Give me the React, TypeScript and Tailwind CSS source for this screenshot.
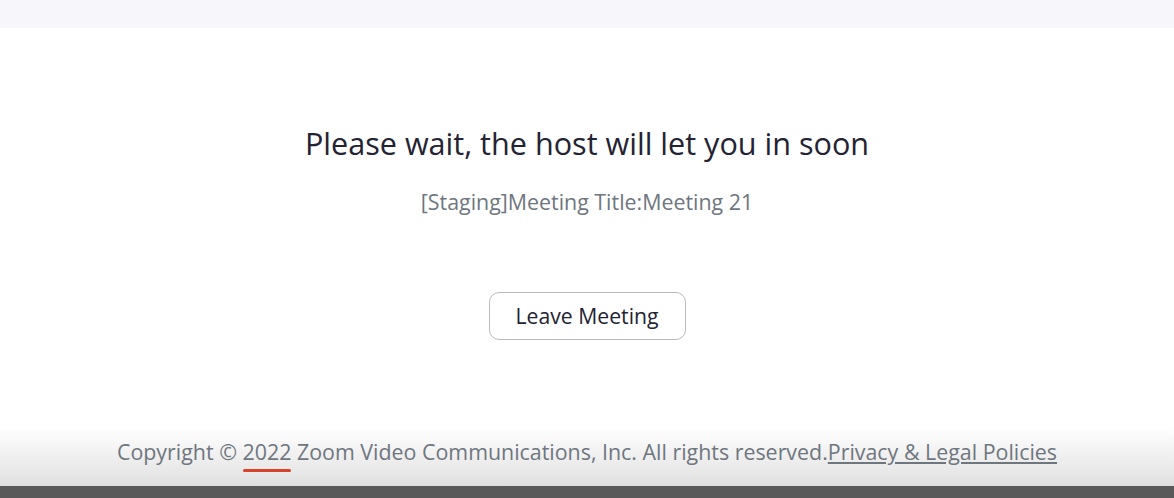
export default function App() {
  return (
    <div
      className="w-[1174px] h-[498px] flex flex-col bg-white overflow-hidden"
      style={{ fontFamily: '"Open Sans", "Noto Sans", sans-serif' }}
    >
      {/* top bar */}
      <div className="h-[28px] bg-[#f7f7fb]" />

      {/* waiting room */}
      <div className="flex-1 flex flex-col items-center">
        <h1 className="mt-[95px] text-[30.6px] leading-[40px] text-[#232333]">
          Please wait, the host will let you in soon
        </h1>
        <p className="mt-[25px] text-[21.4px] leading-[28px] text-[#6e7680]">
          [Staging]Meeting Title:Meeting 21
        </p>
        <button className="mt-[76px] w-[197px] h-[48px] rounded-[10px] border border-[#bababa] bg-white text-[21.2px] text-[#232333]">
          Leave Meeting
        </button>
      </div>

      {/* footer */}
      <div className="h-[58px] flex items-start justify-center pt-[10px] bg-gradient-to-b from-white to-[#e0e0e0]">
        <p className="text-[21.4px] leading-[28px] text-[#6e7680]">
          Copyright ©{" "}
          <span className="relative">
            2022
            <span className="absolute left-0 right-0 -bottom-[6px] h-[3px] rounded-full bg-[#d8432b]" />
          </span>{" "}
          Zoom Video Communications, Inc. All rights reserved.
          <a className="underline">Privacy &amp; Legal Policies</a>
        </p>
      </div>
      <div className="h-[12px] bg-[#595959]" />
    </div>
  );
}
